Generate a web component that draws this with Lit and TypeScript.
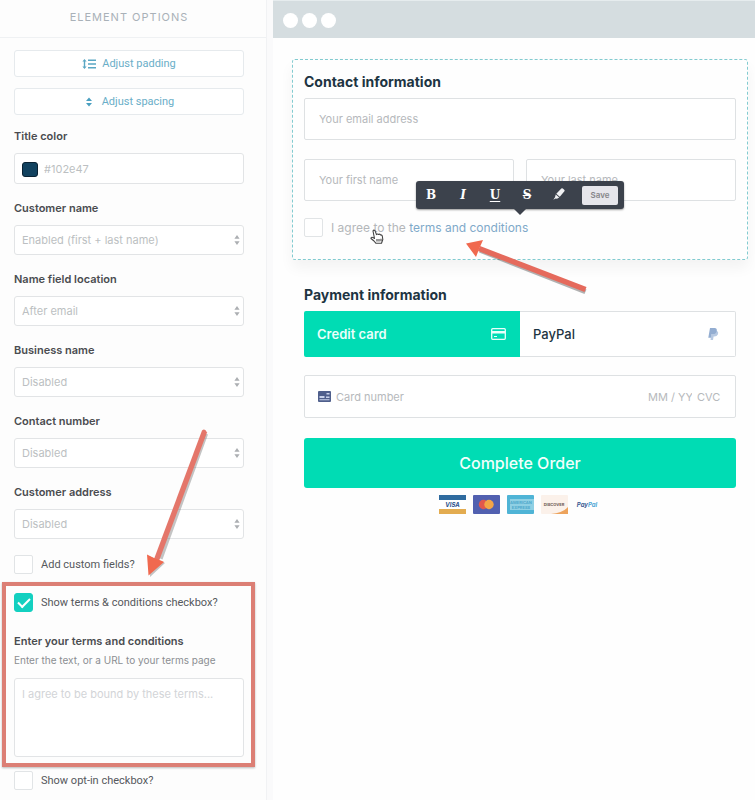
import { LitElement, html, css, svg } from "lit";
import { customElement, state } from "lit/decorators.js";

interface SelectField {
  id: string;
  label: string;
  options: string[];
}

const SELECTS: SelectField[] = [
  { id: "customer-name", label: "Customer name", options: ["Enabled (first + last name)", "Disabled"] },
  { id: "name-location", label: "Name field location", options: ["After email", "Before email"] },
  { id: "business-name", label: "Business name", options: ["Disabled", "Enabled"] },
  { id: "contact-number", label: "Contact number", options: ["Disabled", "Enabled"] },
  { id: "customer-address", label: "Customer address", options: ["Disabled", "Enabled"] },
];

const controls = css`
  * {
    box-sizing: border-box;
  }
  button,
  input,
  select,
  textarea {
    font: inherit;
    color: inherit;
    margin: 0;
    border-radius: 3px;
    outline: none;
  }
  button {
    cursor: pointer;
  }
  .tick {
    appearance: none;
    flex: none;
    width: 19px;
    height: 19px;
    border: 1px solid #e1e4e6;
    border-radius: 2px;
    background: #fff;
    display: grid;
    place-items: center;
  }
  .tick:checked {
    background: #13d0c0;
    border-color: #13d0c0;
    border-radius: 3px;
  }
  .tick:checked::after {
    content: "";
    width: 10px;
    height: 5px;
    margin-bottom: 3px;
    border: solid #fff;
    border-width: 0 0 2px 2px;
    transform: rotate(-45deg);
  }
`;

@customElement("options-panel")
export class OptionsPanel extends LitElement {
  @state() private showTerms = true;

  static styles = [
    controls,
    css`
      :host {
        display: block;
        position: relative;
        font-family: Inter, sans-serif;
        font-size: 11px;
        line-height: 16px;
        color: #55585c;
        background: #fdfdfd;
        border-right: 1px solid #f1f2f4;
      }
      .title {
        margin: 0;
        height: 38px;
        padding: 9px 8px 0 0;
        border-bottom: 1px solid #eff1f3;
        text-align: center;
        font-size: 11px;
        font-weight: 400;
        letter-spacing: 1px;
        color: #a9b1b8;
      }
      .body {
        padding: 12px 22px 10px 14px;
      }
      .adjust {
        display: flex;
        align-items: center;
        justify-content: center;
        gap: 6px;
        width: 100%;
        height: 27px;
        margin-bottom: 11px;
        border: 1px solid #e6eaed;
        background: #fff;
        color: #6aaec8;
        font-family: Roboto, sans-serif;
      }
      .fields {
        padding-top: 2px;
      }
      .field {
        display: grid;
        gap: 9px;
        margin-bottom: 16px;
      }
      .field > label,
      .strong {
        font-weight: 600;
        color: #4a4c50;
      }
      .color,
      .select {
        display: flex;
        align-items: center;
        position: relative;
        height: 31px;
        border: 1px solid #e2e4e6;
        border-radius: 3px;
        background: #fff;
        color: #bcbfc2;
      }
      .select {
        height: 30px;
      }
      .swatch {
        flex: none;
        width: 16px;
        height: 15px;
        margin: 1px 6px 0 7px;
        border: 1px solid #0a2233;
        border-radius: 3px;
        background: #12425f;
      }
      .color input {
        flex: 1;
        min-width: 0;
        border: 0;
        padding: 0;
        background: none;
      }
      select {
        appearance: none;
        width: 100%;
        height: 100%;
        padding: 0 24px 0 7px;
        border: 0;
        background: none;
      }
      .select svg {
        position: absolute;
        right: 3px;
        pointer-events: none;
      }
      .check {
        display: flex;
        align-items: center;
        gap: 8px;
        height: 19px;
        font-family: Roboto, sans-serif;
      }
      .terms {
        position: relative;
        margin: 19px 0 14px;
      }
      .terms::after {
        content: "";
        position: absolute;
        inset: -11px -11px -10px -12px;
        border: 4px solid #dc7f75;
        box-shadow: 0 1px 2px #0004;
        pointer-events: none;
      }
      .entry {
        display: grid;
        padding-top: 21px;
      }
      .entry label {
        margin-bottom: 3px;
      }
      .hint {
        font-size: 10px;
        color: #8b8e92;
        margin-bottom: 10px;
      }
      textarea {
        display: block;
        width: 100%;
        height: 79px;
        padding: 7px;
        border: 1px solid #e2e4e6;
        background: #fff;
        resize: none;
      }
      textarea::placeholder {
        color: #d2d4d7;
      }
      .arrow {
        position: absolute;
        left: 140px;
        top: 424px;
        pointer-events: none;
      }
    `,
  ];

  private renderSelect(f: SelectField) {
    return html`<div class="field">
      <label for=${f.id}>${f.label}</label>
      <div class="select">
        <select id=${f.id}>
          ${f.options.map((o) => html`<option>${o}</option>`)}
        </select>
        <svg width="6" height="10" viewBox="0 0 6 10" fill="#acafb2">
          <path d="M3 0 5.600 3.700H.4zM3 10 .4 6.300h5.200z" />
        </svg>
      </div>
    </div>`;
  }

  render() {
    return html`
      <h2 class="title">ELEMENT OPTIONS</h2>
      <div class="body">
        <button class="adjust" type="button">
          <svg width="14" height="10" viewBox="0 0 14 10" fill="#5aa7c4">
            <path d="M2.500 0 4.600 2.600H3.200v4.800h1.400L2.500 10 .4 7.400h1.400V2.600H.4zM6 .5h8v1.500H6zM6 4.200h8v1.500H6zM6 8h8v1.500H6z" />
          </svg>
          Adjust padding
        </button>
        <button class="adjust" type="button">
          <svg width="12" height="10" viewBox="0 0 12 10" fill="#4a9fc0">
            <path d="M5 .5 8 4H2zM5 9.500 2 6h6z" />
          </svg>
          Adjust spacing
        </button>
        <div class="fields">
          <div class="field">
            <label for="title-color">Title color</label>
            <div class="color">
              <span class="swatch"></span>
              <input id="title-color" type="text" value="#102e47" />
            </div>
          </div>
          ${SELECTS.map((f) => this.renderSelect(f))}
        </div>
        <label class="check"><input class="tick" type="checkbox" />Add custom fields?</label>
        <div class="terms">
          <label class="check">
            <input
              class="tick"
              type="checkbox"
              .checked=${this.showTerms}
              @change=${(e: Event) => (this.showTerms = (e.target as HTMLInputElement).checked)}
            />Show terms &amp; conditions checkbox?
          </label>
          ${this.showTerms
            ? html`<div class="entry">
                <label class="strong" for="terms-text">Enter your terms and conditions</label>
                <span class="hint">Enter the text, or a URL to your terms page</span>
                <textarea id="terms-text" placeholder="I agree to be bound by these terms..."></textarea>
              </div>`
            : null}
        </div>
        <label class="check"><input class="tick" type="checkbox" />Show opt-in checkbox?</label>
      </div>
      <svg class="arrow" width="76" height="156" viewBox="0 0 76 156">
        <g transform="translate(1 2)" fill="#555" opacity=".35"><path d="M62 6.500 67 8.500 21.500 133.500 16.500 131.500zM9 151V130.500L16.500 133.500 21 135.500 24 137z" /></g>
        <path d="M62 6.500Q65 4 67 8.500L19 137 14 135z" fill="#e4766a" />
        <path d="M8.500 151.500 7 130.500 14 134 22 137 24 138z" fill="#f0694f" />
      </svg>
    `;
  }
}

const payments = [
  {
    name: "Visa",
    art: svg`<rect width="27" height="19" fill="#fff"/><rect width="27" height="5" fill="#2f6b9f"/><rect y="14" width="27" height="5" fill="#e3ac50"/><text x="13.500" y="12" text-anchor="middle" font-size="6" font-weight="700" font-style="italic" fill="#2a4f8c">VISA</text>`,
  },
  {
    name: "Mastercard",
    art: svg`<rect width="27" height="19" rx="1" fill="#5160b0"/><circle cx="10.500" cy="9.500" r="4.700" fill="#e2574c"/><circle cx="16" cy="9.500" r="4.700" fill="#f3a547"/>`,
  },
  {
    name: "American Express",
    art: svg`<rect width="27" height="19" rx="1" fill="#4fb4d6"/><rect x="3" y="4" width="24" height="11" fill="#8fd0e4"/><text x="14" y="9" text-anchor="middle" font-size="4" font-weight="700" fill="#4fa9cc">AMERICAN</text><text x="14" y="14" text-anchor="middle" font-size="4" font-weight="700" fill="#4fa9cc">EXPRESS</text>`,
  },
  {
    name: "Discover",
    art: svg`<rect width="27" height="19" rx="1" fill="#fbf1ea"/><path d="M27 12v7H10q12-1 17-7" fill="#eda35c"/><text x="13" y="11" text-anchor="middle" font-size="4" font-weight="700" fill="#6d5a55">DISCOVER</text>`,
  },
  {
    name: "PayPal",
    art: svg`<text x="12" y="12" text-anchor="middle" font-size="6" font-weight="700" font-style="italic" fill="#3c5a92">Pay<tspan fill="#4fa6d6">Pal</tspan></text>`,
  },
];

@customElement("checkout-preview")
export class CheckoutPreview extends LitElement {
  static styles = [
    controls,
    css`
      :host {
        display: block;
        font-family: Inter, sans-serif;
        font-size: 11px;
        line-height: 16px;
        color: #1d3442;
        background: #fefefe;
      }
      .chrome {
        display: flex;
        align-items: center;
        gap: 4px;
        height: 38px;
        padding: 2px 0 0 10px;
        background: #d5dde0;
        border-top: 1px solid #e6ecee;
      }
      .dot {
        width: 15px;
        height: 15px;
        border-radius: 50%;
        background: #fff;
      }
      .page {
        padding: 21px 7px 20px 19px;
      }
      .contact {
        position: relative;
        padding: 12px 11px 22px;
        border: 1px dashed #82cbd0;
        border-radius: 3px;
        background: #fefefe;
        box-shadow: 0 8px 14px #0000000c;
      }
      h2 {
        margin: 0 0 6px;
        font-size: 14px;
        line-height: 20px;
        font-weight: 700;
      }
      .row {
        display: grid;
        grid-template-columns: 1fr 1fr;
        gap: 12px;
        margin: 19px 0 17px;
      }
      .text {
        display: block;
        width: 100%;
        min-width: 0;
        height: 42px;
        padding: 0 14px;
        border: 1px solid #dee1e3;
        border-radius: 2px;
        background: #fff;
      }
      ::placeholder {
        color: #b6b9bc;
        opacity: 1;
      }
      .agree {
        display: flex;
        align-items: center;
        gap: 8px;
        height: 19px;
        font-size: 12px;
        color: #b4b7ba;
      }
      a {
        color: #7fa9c9;
        text-decoration: none;
      }
      .toolbar {
        position: absolute;
        left: 123px;
        top: 121px;
        display: flex;
        align-items: center;
        justify-content: space-between;
        width: 208px;
        height: 28px;
        padding-right: 6px;
        border-radius: 3px;
        background: #3c424c;
        box-shadow: 0 1px 2px #0006;
        color: #fff;
        font-family: "DejaVu Serif", serif;
      }
      .toolbar::after {
        content: "";
        position: absolute;
        top: 28px;
        left: 98px;
        border: 6px solid transparent;
        border-top-color: #3c424c;
        border-bottom: 0;
      }
      .tool {
        width: 30px;
        height: 28px;
        padding: 0;
        border: 0;
        background: none;
        font-size: 12px;
        font-weight: 700;
        line-height: 14px;
      }
      .italic {
        font-style: italic;
      }
      .under {
        text-decoration: underline;
        text-underline-offset: 2px;
      }
      .strike {
        text-decoration: line-through;
      }
      .save {
        width: 36px;
        height: 19px;
        margin-left: 6px;
        padding: 0;
        border: 0;
        border-radius: 2px;
        background: #e6e6eb;
        color: #858589;
        font-family: Inter, sans-serif;
        font-size: 8px;
        font-weight: 600;
        line-height: 12px;
      }
      .arrow,
      .hand {
        position: absolute;
        pointer-events: none;
      }
      .arrow {
        left: 170px;
        top: 178px;
      }
      .hand {
        left: 77px;
        top: 169px;
      }
      .payment {
        padding: 25px 12px 0;
      }
      .tabs {
        display: grid;
        grid-template-columns: 1fr 1fr;
        margin-bottom: 18px;
      }
      .tab {
        display: flex;
        align-items: center;
        justify-content: space-between;
        height: 46px;
        padding: 0 16px 0 13px;
        border: 1px solid #dee1e3;
        border-left: 0;
        border-radius: 0 2px 2px 0;
        background: #fff;
        font-size: 13px;
        font-weight: 500;
      }
      .tab.on {
        padding: 0 14px 0 13px;
        border: 0;
        border-radius: 2px 0 0 2px;
        background: #00dcb4;
        color: #e9fffb;
        font-weight: 600;
      }
      .card {
        display: flex;
        align-items: center;
        gap: 5px;
        height: 43px;
        padding: 0 12px 0 13px;
        border: 1px solid #dee1e3;
        border-radius: 2px;
        background: #fff;
      }
      .card svg {
        flex: none;
      }
      .card input {
        border: 0;
        padding: 0;
        background: none;
        min-width: 0;
      }
      .number {
        flex: 1;
      }
      .expiry {
        width: 44px;
      }
      .cvc {
        width: 26px;
      }
      .order {
        display: block;
        width: 100%;
        height: 50px;
        margin: 20px 0 7px;
        border: 0;
        background: #00dcb4;
        color: #f2fffc;
        font-size: 16px;
        font-weight: 500;
      }
      .brands {
        display: flex;
        justify-content: center;
        gap: 7px;
      }
    `,
  ];

  render() {
    return html`
      <div class="chrome"><span class="dot"></span><span class="dot"></span><span class="dot"></span></div>
      <div class="page">
        <section class="contact">
          <h2>Contact information</h2>
          <input class="text" type="email" placeholder="Your email address" aria-label="Your email address" />
          <div class="row">
            <input class="text" type="text" placeholder="Your first name" aria-label="Your first name" />
            <input class="text" type="text" placeholder="Your last name" aria-label="Your last name" />
          </div>
          <div class="agree">
            <input class="tick" id="agree" type="checkbox" />
            <span><label for="agree">I agree to the</label> <a href="#terms">terms and conditions</a></span>
          </div>
          <div class="toolbar">
            <button class="tool" type="button" aria-label="Bold">B</button>
            <button class="tool italic" type="button" aria-label="Italic">I</button>
            <button class="tool under" type="button" aria-label="Underline">U</button>
            <button class="tool strike" type="button" aria-label="Strikethrough">S</button>
            <button class="tool" type="button" aria-label="Highlight">
              <svg width="12" height="12" viewBox="0 0 12 12" fill="#f0f1f3">
                <path d="M8.300.6q.7-.7 1.500 0l1.400 1.200q.8.700.2 1.500L6.800 8.800 3.300 5.800zM2.700 6.600 6.200 9.500 4 10.800 2.700 10.500.3 11.700 2 9.300z" />
              </svg>
            </button>
            <button class="save" type="button">Save</button>
          </div>
          <svg class="arrow" width="126" height="58" viewBox="0 0 126 58">
            <path d="M18 11 123.500 51.500 121.500 56 16 14.500z" fill="#555" opacity=".45" />
            <path d="M17 8 123.500 49 121.500 54 15 13z" fill="#e56a5c" />
            <path d="M3 5.500 20 2 16.500 10 13 19z" fill="#f0694f" />
          </svg>
          <svg class="hand" width="14" height="16" viewBox="0 0 14 16" fill="#fff" stroke="#444" stroke-width="1.100" stroke-linejoin="round">
            <path d="M3 2Q3.600.4 5 1.600L6.500 5.600Q7.500 4.500 8.500 5.500 9.600 4.700 10.500 5.900 11.800 5.500 12.300 7L12.800 10.500 11.500 14.200H5.800L4 12 1 9.500Q1 7.800 2.800 8.400L4.500 9.500z" />
            <path d="M7 10v2.500M9 10v2.500M11 9.800v2.500" />
          </svg>
        </section>
        <section class="payment">
          <h2>Payment information</h2>
          <div class="tabs">
            <button class="tab on" type="button">
              Credit card
              <svg width="15" height="12" viewBox="0 0 15 12">
                <rect x=".7" y=".7" width="13.600" height="10.600" rx="1" fill="none" stroke="#e9fffb" stroke-width="1.300" />
                <path d="M1 3h13v2.500H1zM3 8h3v1H3z" fill="#e9fffb" />
              </svg>
            </button>
            <button class="tab" type="button">
              PayPal
              <svg width="11" height="12" viewBox="0 0 11 12">
                <path d="M3.800 3H9q1.800 1 1 3.200Q9 8.400 6.300 8.400H5.600L5 12H2.500z" fill="#b7c9e2" />
                <path d="M2 0h4.600q2.600.3 2.200 2.900Q8.200 6 5 6H3.500L2.900 9.800H.3z" fill="#93add1" />
              </svg>
            </button>
          </div>
          <div class="card">
            <svg width="13" height="11" viewBox="0 0 13 11">
              <rect width="13" height="11" rx="1" fill="#4f5f8c" />
              <path d="M1.500 5h5v2h-5zM8.500 2h3v1.500h-3zM1.500 8.300h10v1h-10zM8 5.500h3.500V7H8z" fill="#c9d2ea" />
            </svg>
            <input class="number" type="text" placeholder="Card number" aria-label="Card number" />
            <input class="expiry" type="text" placeholder="MM / YY" aria-label="Expiry date" />
            <input class="cvc" type="text" placeholder="CVC" aria-label="Security code" />
          </div>
          <button class="order" type="button">Complete Order</button>
          <div class="brands">
            ${payments.map(
              (p) => html`<svg width="27" height="19" viewBox="0 0 27 19" role="img" aria-label=${p.name}>${p.art}</svg>`,
            )}
          </div>
        </section>
      </div>
    `;
  }
}

@customElement("app-root")
export class AppRoot extends LitElement {
  static styles = css`
    :host {
      display: grid;
      grid-template-columns: minmax(240px, 267px) 1fr;
      gap: 6px;
      background: #fafafb;
      min-height: 100vh;
    }
  `;

  render() {
    return html`<options-panel></options-panel><checkout-preview></checkout-preview>`;
  }
}
